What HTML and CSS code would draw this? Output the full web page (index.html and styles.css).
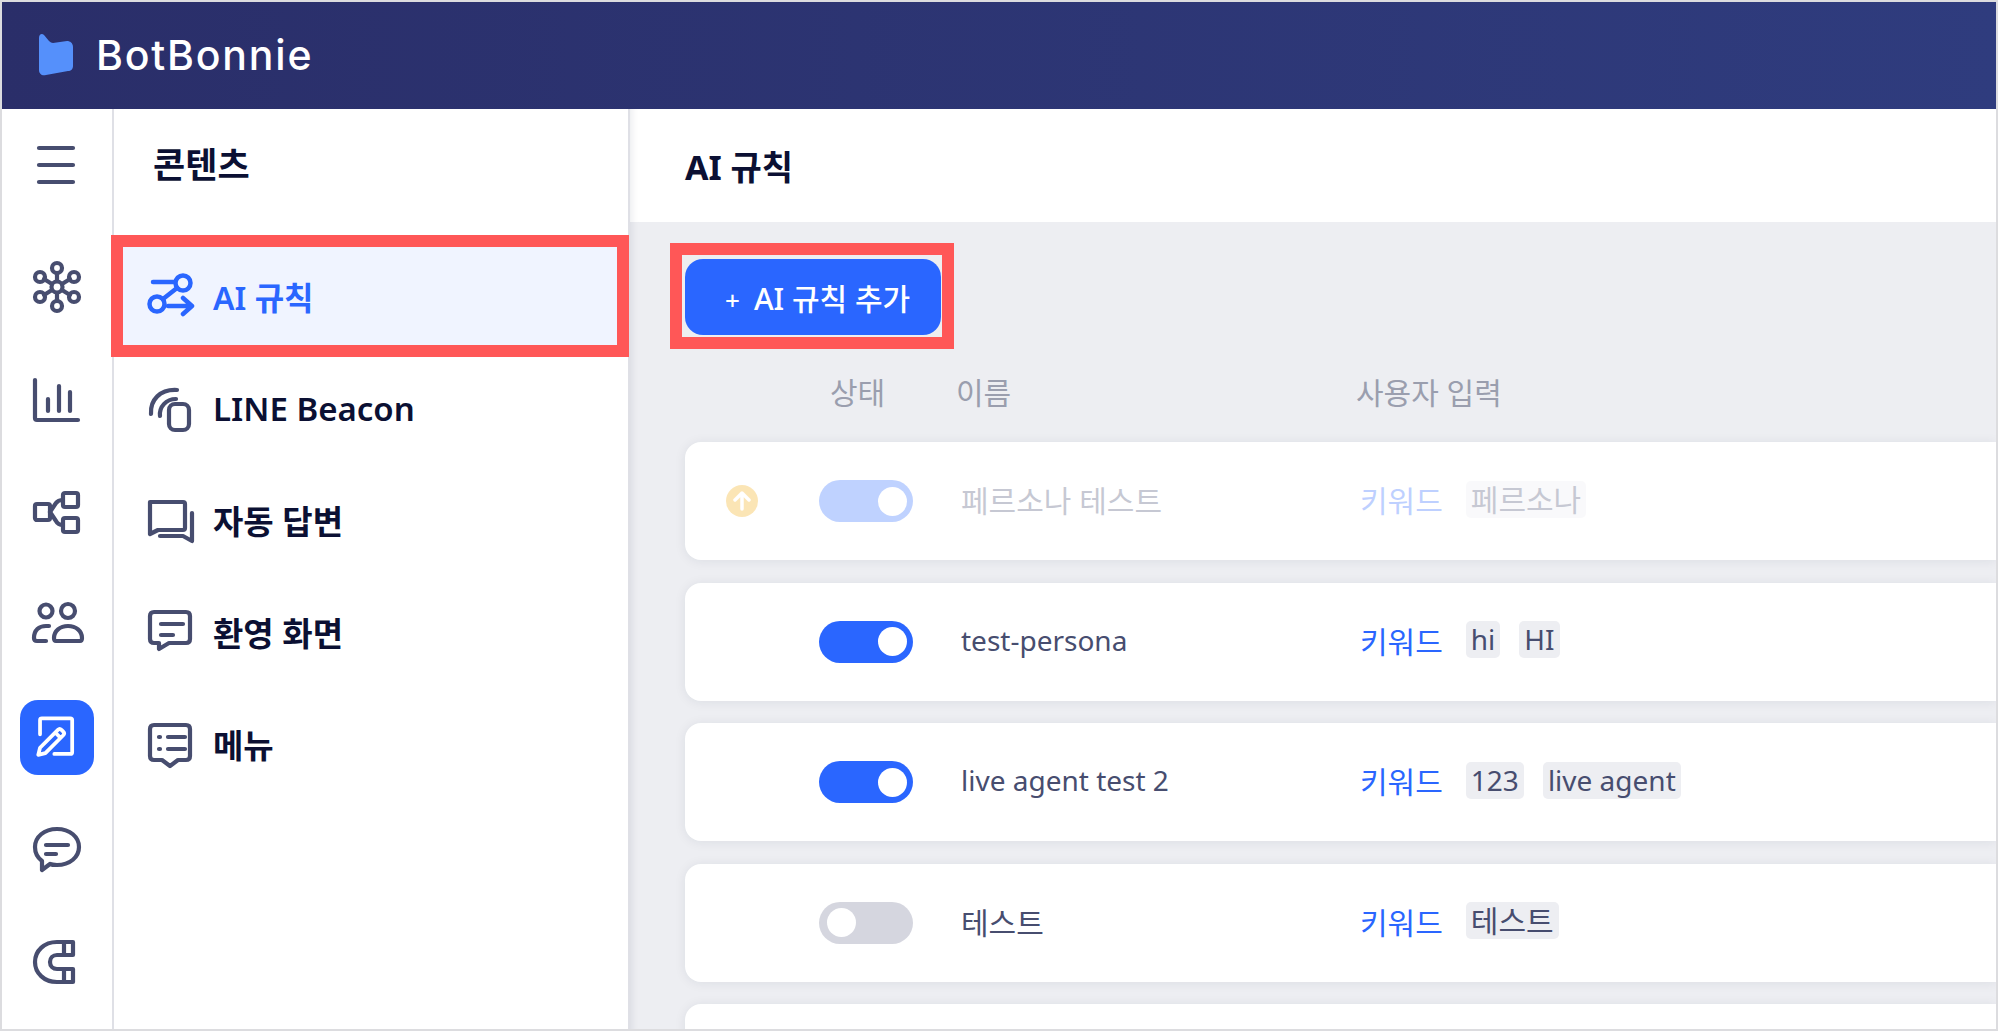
FILE: index.html
```html
<!DOCTYPE html>
<html lang="ko">
<head>
<meta charset="utf-8">
<title>BotBonnie AI 규칙</title>
<link rel="stylesheet" href="styles.css">
</head>
<body>
<div class="frame">
  <header class="topbar">
    <svg class="logo" width="36" height="44" viewBox="0 0 36 44"><path d="M1 5c0-4 3-5 5-3l5 6q2 2 4 2l14-2c3 0 6 2 6 6v19c0 3-2 5-5 5L8 42c-4 1-7-1-7-5z" fill="#5590fb"/></svg>
    <span class="brand">BotBonnie</span>
  </header>
  <div class="body">
    <nav class="rail">
      <div class="slot slot-menu"><svg class="ic" viewBox="0 0 56 56"><path d="M10 11h34M10 28h34M10 45h34"/></svg></div>
      <div class="slot"><svg class="ic" viewBox="0 0 56 56"><circle cx="28" cy="28" r="5.500"/><circle cx="28" cy="9" r="5"/><circle cx="28" cy="47" r="5"/><circle cx="11" cy="18" r="5"/><circle cx="45" cy="18" r="5"/><circle cx="11" cy="38" r="5"/><circle cx="45" cy="38" r="5"/><path d="M28 14v8M28 34v8M15 20l8 5M41 20l-8 5M15 36l8-5M41 36l-8-5"/></svg></div>
      <div class="slot"><svg class="ic" viewBox="0 0 56 56"><path d="M6 8v38q0 2 2 2h41M19 27v12M30 14v25M41 20v19"/></svg></div>
      <div class="slot"><svg class="ic" viewBox="0 0 56 56"><rect x="6" y="20" width="15" height="16" rx="2"/><rect x="34" y="9" width="15" height="14" rx="2"/><rect x="34" y="34" width="15" height="14" rx="2"/><path d="M21 28l6-9q2-3 7-3M21 28l6 9q2 4 7 4"/></svg></div>
      <div class="slot"><svg class="ic" viewBox="0 0 56 56"><circle cx="17" cy="14" r="6.500"/><circle cx="39" cy="14" r="7"/><path d="M20 29h-3C10 29 5 33 5 41q0 3 3 3h9"/><path d="M27 44q-2 0-2-3c0-7 6-12 14-12s14 5 14 12q0 3-2 3z"/></svg></div>
      <div class="slot"><div class="rail-active"><svg class="ic ic-white" viewBox="0 0 56 56"><path d="M9 25V9q0-2 2-2h32q2 0 2 2v36q0 2-2 2H25"/><path d="M7 48l2-8 20-20q2-2 4 0l2 2q2 2 0 4L15 46zM26 23l6 6"/></svg></div></div>
      <div class="slot"><svg class="ic" viewBox="0 0 56 56"><path d="M28 7c13 0 22 8 22 18s-9 18-22 18c-3 0-5 0-7 -1l-8 6v-9C9 36 6 31 6 25 6 15 15 7 28 7z"/><path d="M17 23h22M17 32h10"/></svg></div>
      <div class="slot"><svg class="ic" viewBox="0 0 56 56"><path d="M44 8H28C15 8 6 17 6 28s9 20 22 20h16V35H28c-4 0-7-3-7-7s3-7 7-7h16zM35 8v13M35 35v13"/></svg></div>
    </nav>
    <aside class="panel">
      <h2 class="panel-title">콘텐츠</h2>
      <a class="item item-active">
        <svg class="ic ic-blue" viewBox="0 0 50 50"><circle cx="38" cy="12" r="7.500"/><circle cx="12" cy="33" r="7.500"/><path d="M8 11h22M32 17L18 28M23 35h24M38 27l9 8-9 8"/></svg>
        <span>AI 규칙</span>
        <i class="mark mark-item"></i>
      </a>
      <a class="item">
        <svg class="ic" viewBox="0 0 50 50"><rect x="24" y="21" width="20" height="26" rx="6"/><path d="M6 31C5 17 15 6 32 7"/><path d="M15 33C14 24 21 16 31 16"/></svg>
        <span>LINE Beacon</span>
      </a>
      <a class="item">
        <svg class="ic" viewBox="0 0 50 50"><path d="M5 7h33q2 0 2 2v24q0 2-2 2H13l-8 4z"/><path d="M15 41h23l9 5V18"/></svg>
        <span>자동 답변</span>
      </a>
      <a class="item">
        <svg class="ic" viewBox="0 0 50 50"><path d="M9 5h32q4 0 4 4v23q0 4-4 4H24l-10 6v-6H9q-4 0-4-4V9q0-4 4-4z"/><path d="M16 17h22M16 28h12"/></svg>
        <span>환영 화면</span>
      </a>
      <a class="item">
        <svg class="ic" viewBox="0 0 50 50"><path d="M9 6h32q4 0 4 4v27q0 4-4 4H33l-8 6-8-6H9q-4 0-4-4V10q0-4 4-4z"/><path d="M23 18h17M23 30h17M14 18h1M14 30h1"/></svg>
        <span>메뉴</span>
      </a>
    </aside>
    <main class="main">
      <div class="main-head"><h1 class="main-title">AI 규칙</h1></div>
      <div class="content">
        <div class="mark-btn"><button class="btn"><span class="plus">+</span>AI 규칙 추가</button></div>
        <div class="thead">
          <span>상태</span><span>이름</span><span>사용자 입력</span>
        </div>
        <div class="cards">
          <section class="card card-dim">
            <svg class="up" width="32" height="32" viewBox="0 0 32 32"><circle cx="16" cy="16" r="16" fill="#f5ac0f"/><path d="M16 24V9M9 15l7-7 7 7" fill="none" stroke="#fff" stroke-width="3.500" stroke-linecap="round" stroke-linejoin="round"/></svg>
            <div class="toggle on"></div>
            <div class="name">페르소나 테스트</div>
            <div class="input"><span class="kw">키워드</span><span class="tag">페르소나</span></div>
          </section>
          <section class="card">
            <div class="toggle on"></div>
            <div class="name name-lat">test-persona</div>
            <div class="input"><span class="kw">키워드</span><span class="tag tag-lat">hi</span><span class="tag tag-lat">HI</span></div>
          </section>
          <section class="card">
            <div class="toggle on"></div>
            <div class="name name-lat">live agent test 2</div>
            <div class="input"><span class="kw">키워드</span><span class="tag tag-lat">123</span><span class="tag tag-lat">live agent</span></div>
          </section>
          <section class="card">
            <div class="toggle"></div>
            <div class="name">테스트</div>
            <div class="input"><span class="kw">키워드</span><span class="tag">테스트</span></div>
          </section>
          <section class="card"></section>
        </div>
      </div>
    </main>
  </div>
</div>
</body>
</html>
```
FILE: styles.css
```css
* { box-sizing: border-box; }
html, body { margin: 0; height: 100%; }
body {
  font-family: "Noto Sans", "Noto Sans CJK KR", sans-serif;
  color: #0b1033;
  background: #fff;
  overflow: hidden;
}
.frame {
  height: 1031px;
  width: 1998px;
  border: 2px solid #dcdcdf;
  display: flex;
  flex-direction: column;
  overflow: hidden;
}
.topbar {
  height: 107px;
  flex: none;
  display: flex;
  align-items: center;
  padding-left: 36px;
  background: linear-gradient(90deg, #2a2e69, #2f3c7e);
}
.logo { margin-top: -2px; }
.brand {
  margin: -2px 0 0 22px;
  font-family: "Inter", sans-serif;
  font-size: 41px;
  font-weight: 500;
  letter-spacing: 1.800px;
  color: #fff;
}
.body { flex: 1; display: flex; min-height: 0; }
.ic {
  fill: none;
  stroke: #474d6f;
  stroke-width: 4.200;
  stroke-linecap: round;
  stroke-linejoin: round;
  width: 56px;
  height: 56px;
  flex: none;
}
.ic-blue { stroke: #2a66ff; stroke-width: 4.500; }
.ic-white { stroke: #fff; width: 50px; height: 50px; }
.rail {
  width: 112px;
  flex: none;
  border-right: 2px solid #dfe0e6;
}
.slot {
  height: 112.500px;
  display: flex;
  align-items: center;
  justify-content: center;
}
.slot-menu { margin-bottom: 9.500px; }
.rail-active {
  width: 74px;
  height: 75px;
  border-radius: 18px;
  background: #2a66ff;
  display: flex;
  align-items: center;
  justify-content: center;
}
.panel {
  width: 516px;
  flex: none;
  border-right: 2px solid #dfe0e6;
}
.panel-title {
  margin: 0;
  height: 131px;
  padding: 33px 0 0 39px;
  font-size: 35px;
  line-height: 46px;
  font-weight: 700;
}
.item {
  position: relative;
  height: 112px;
  display: flex;
  align-items: center;
  gap: 18px;
  padding-left: 31px;
  font-size: 33px;
  font-weight: 600;
}
.item .ic { width: 50px; height: 50px; }
.item-active { background: #f0f4ff; color: #2a66ff; font-size: 32px; }
.mark {
  position: absolute;
  border: 12px solid #ff5757;
}
.mark-item { inset: -5px -1px -5px -3px; }
.main { flex: 1; min-width: 0; display: flex; flex-direction: column; }
.main-head {
  height: 113px;
  flex: none;
  display: flex;
  align-items: center;
  padding-left: 55px;
  background: #fff;
  box-shadow: inset 10px 0 10px -10px rgba(20, 25, 60, .12);
}
.main-title { margin: 0; font-size: 34px; font-weight: 700; }
.content {
  flex: 1;
  min-height: 0;
  background: #edeef2;
  padding: 21px 0 0 40px;
  box-shadow: inset 10px 0 10px -10px rgba(20, 25, 60, .12);
}
.mark-btn {
  width: 284px;
  height: 106px;
  border: 12px solid #ff5757;
  padding: 4px 1px 2px 3px;
  background: #eeeef0;
}
.btn {
  display: block;
  width: 100%;
  height: 100%;
  border: 0;
  border-radius: 18px;
  background: #2a66ff;
  color: #fff;
  font-family: inherit;
  font-size: 30px;
  font-weight: 500;
  text-align: left;
  padding: 0 0 0 40px;
  white-space: nowrap;
}
.plus { margin-right: 14px; font-size: 26px; }
.thead {
  height: 93px;
  display: grid;
  grid-template-columns: 126px 400px 1fr;
  align-items: center;
  padding: 0 0 10px 160px;
  font-size: 30px;
  color: #9a9eae;
}
.cards { display: flex; flex-direction: column; gap: 22.500px; }
.card {
  position: relative;
  height: 118px;
  flex: none;
  margin-left: 15px;
  border-radius: 16px 0 0 16px;
  background: #fff;
  box-shadow: 0 1px 12px rgba(30, 35, 70, .08);
  display: grid;
  grid-template-columns: 142px 399px 1fr;
  align-items: center;
  padding-left: 134px;
  font-size: 30px;
  color: #474d6f;
}
.card-dim > * { opacity: .3; }
.up { position: absolute; left: 41px; top: 43px; }
.toggle {
  position: relative;
  width: 94px;
  height: 42px;
  border-radius: 21px;
  background: #d5d6df;
}
.toggle::after {
  content: "";
  position: absolute;
  top: 6.500px;
  left: 8px;
  width: 29px;
  height: 29px;
  border-radius: 50%;
  background: #fff;
}
.toggle.on { background: #2a66ff; }
.toggle.on::after { left: auto; right: 6px; }
.card-dim .toggle { opacity: 1; background: #bfd2ff; }
.name { padding-bottom: 4px; }
.name-lat { font-size: 28px; }
.input { display: flex; align-items: center; padding-bottom: 4px; }
.kw { color: #2a66ff; margin-right: 23px; }
.tag {
  height: 37px;
  line-height: 37px;
  padding: 0 5px;
  margin-right: 19px;
  border-radius: 5px;
  background: #edeef2;
}
.tag-lat { font-size: 28px; }
```
